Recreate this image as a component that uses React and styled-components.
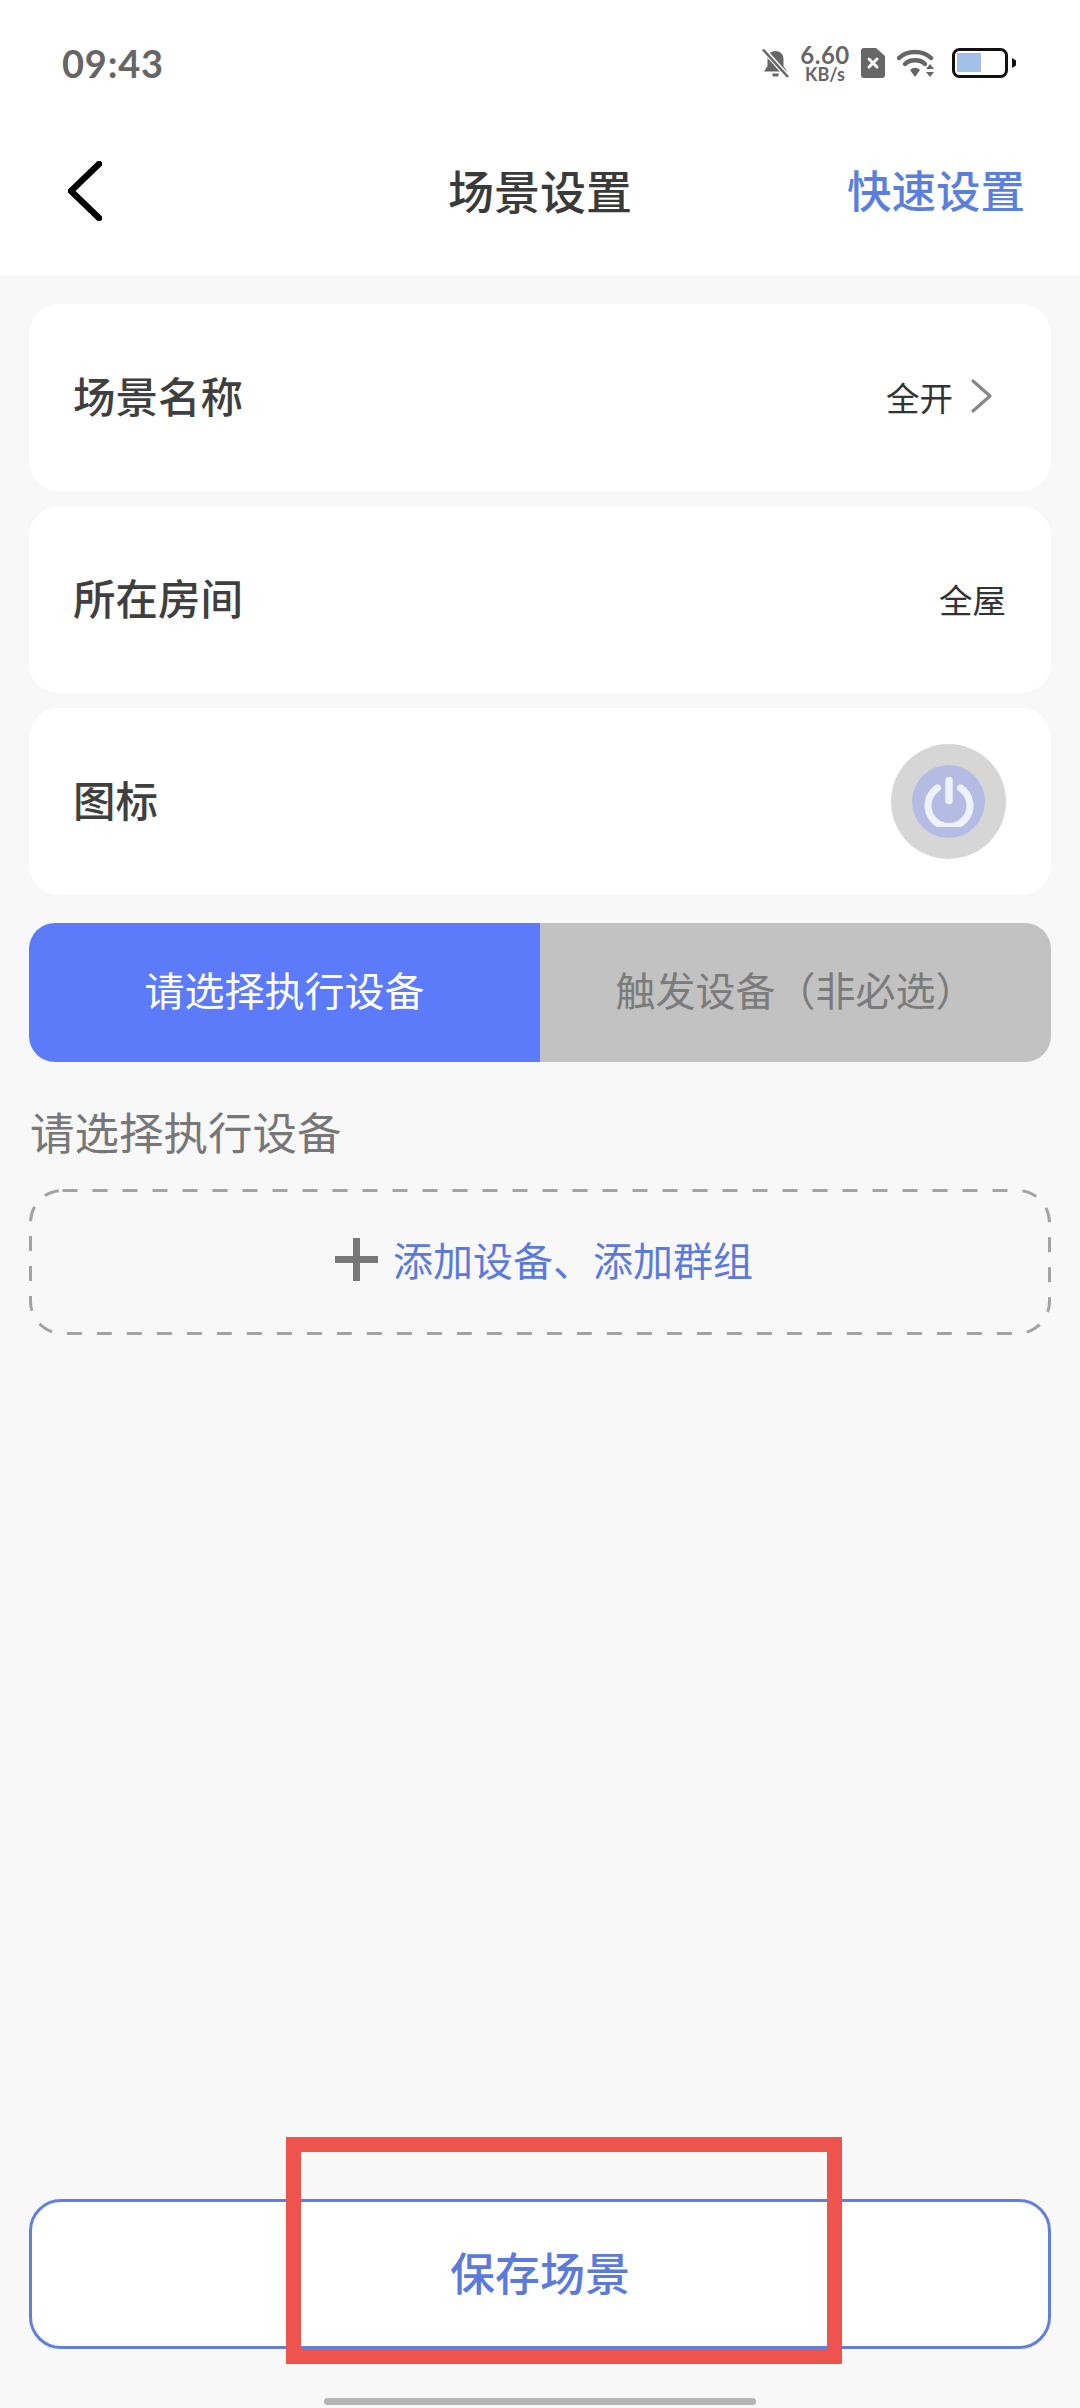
import React from "react";
import styled, { createGlobalStyle } from "styled-components";

const Global = createGlobalStyle`
  html, body { margin: 0; padding: 0; background: #f8f8f9; }
  * { box-sizing: border-box; }
  body { font-family: "Noto Sans CJK SC", "Noto Sans", sans-serif; }
`;

const Page = styled.div`
  position: relative;
  width: 1080px;
  height: 2408px;
  overflow: hidden;
  background: #f8f8f9;
  display: flex;
  flex-direction: column;
`;

const Top = styled.header`
  background: #fff;
  height: 275px;
  flex: none;
`;

const StatusBar = styled.div`
  height: 126px;
  padding: 0 64px 0 62px;
  display: flex;
  align-items: center;
  justify-content: space-between;
`;

const Time = styled.span`
  font-family: Lato, "Noto Sans", sans-serif;
  font-size: 38px;
  font-weight: 700;
  letter-spacing: 0.8px;
  color: #666;
`;

const StatusIcons = styled.div`
  display: flex;
  align-items: center;
`;

const Speed = styled.div`
  width: 48px;
  margin: 0 12px;
  display: flex;
  flex-direction: column;
  align-items: center;
  font-family: Lato, "Noto Sans", sans-serif;
  font-weight: 700;
  color: #666;
`;

const SpeedValue = styled.span`
  font-size: 24px;
  line-height: 23px;
  letter-spacing: 0.5px;
`;

const SpeedUnit = styled.span`
  font-size: 18px;
  line-height: 17px;
`;

const Nav = styled.nav`
  height: 132px;
  padding: 0 55px 3px;
  display: grid;
  grid-template-columns: 1fr auto 1fr;
  align-items: center;
`;

const BackIcon = styled.svg`
  width: 34px;
  height: 60px;
  margin-left: 13px;
  display: block;
`;

const Title = styled.h1`
  margin: 0;
  padding-bottom: 3px;
  font-size: 46px;
  line-height: 60px;
  font-weight: 500;
  color: #3a3a3a;
`;

const QuickLink = styled.span`
  justify-self: end;
  padding-bottom: 3px;
  font-size: 44.5px;
  line-height: 60px;
  font-weight: 500;
  color: #5b7fdc;
`;

const Content = styled.main`
  flex: 1;
  padding: 29px 29px 0;
  display: flex;
  flex-direction: column;
`;

const Cards = styled.div`
  display: flex;
  flex-direction: column;
  gap: 15px;
`;

const Card = styled.div`
  height: 187px;
  padding: 0 ${(p) => p.$pr || 45}px 0 44px;
  background: #fff;
  border-radius: 30px;
  display: flex;
  align-items: center;
  justify-content: space-between;
`;

const Label = styled.span`
  padding-bottom: 6px;
  font-size: 42.5px;
  font-weight: 500;
  color: #3f3f3f;
`;

const Value = styled.span`
  padding-bottom: 3px;
  display: flex;
  align-items: center;
  gap: 18px;
  font-size: 33.5px;
  color: #333;
`;

const ChevronIcon = styled.svg`
  width: 22px;
  height: 34px;
  display: block;
`;

const SceneIcon = styled.div`
  width: 115px;
  height: 115px;
  border-radius: 50%;
  background: #d6d6d6;
  display: flex;
  align-items: center;
  justify-content: center;
`;

const SceneIconInner = styled.div`
  width: 73px;
  height: 73px;
  border-radius: 50%;
  background: #b4bce4;
  display: flex;
  align-items: center;
  justify-content: center;
`;

const Tabs = styled.div`
  margin-top: 28px;
  height: 139px;
  border-radius: 26px;
  overflow: hidden;
  display: flex;
`;

const Tab = styled.div`
  flex: 1;
  padding-bottom: 7px;
  display: flex;
  align-items: center;
  justify-content: center;
  font-size: 40px;
  background: ${(p) => (p.$active ? "#5b7bfb" : "#c2c2c2")};
  color: ${(p) => (p.$active ? "#fff" : "#7b7b7b")};
`;

const SectionLabel = styled.div`
  margin: 38px 0 27px 1px;
  font-size: 44.5px;
  line-height: 62px;
  color: #777;
`;

const Dashed = styled.div`
  position: relative;
  height: 146px;
  padding: 0 0 6px 8px;
  display: flex;
  align-items: center;
  justify-content: center;
  gap: 15px;
`;

const DashedOutline = styled.svg`
  position: absolute;
  left: 0;
  top: 0;
  width: 100%;
  height: 100%;
`;

const PlusIcon = styled.svg`
  width: 43px;
  height: 43px;
  display: block;
`;

const AddText = styled.span`
  font-size: 40px;
  color: #5b7bdc;
`;

const SaveButton = styled.button`
  margin-top: auto;
  margin-bottom: 59px;
  height: 150px;
  padding: 0 0 5px;
  background: #fff;
  border: 3px solid #647fdb;
  border-radius: 32px;
  font-family: inherit;
  font-size: 45px;
  font-weight: 500;
  color: #5b7bdc;
`;

const HomeBar = styled.div`
  position: absolute;
  left: 324px;
  top: 2398px;
  width: 432px;
  height: 7px;
  border-radius: 4px;
  background: #b4b4b4;
`;

const Annotation = styled.div`
  position: absolute;
  left: 286px;
  top: 2137px;
  width: 556px;
  height: 227px;
  border: 15px solid #ef534e;
`;

const Svg = styled.svg`
  display: block;
  flex: none;
`;

const WifiIcon = styled(Svg)`
  margin-left: 12px;
`;

const BatteryIcon = styled(Svg)`
  margin-left: 17px;
`;

export default function App() {
  return (
    <Page>
      <Global />
      <Top>
        <StatusBar>
          <Time>09:43</Time>
          <StatusIcons>
            <Svg width="27" height="30" viewBox="0 0 27 30">
              <path d="M13.5 3c-5 0-8 3.5-8 8.5v6.5l-3.500 5.500h23l-3.500-5.500v-6.500c0-5-3-8.500-8-8.500z" fill="#666" />
              <path d="M10 25.500h7l-1 3h-5z" fill="#666" />
              <path d="M1 1l25 28" stroke="#fff" strokeWidth="5" />
              <path d="M1 1.500l25 27.500" stroke="#666" strokeWidth="2.6" />
            </Svg>
            <Speed>
              <SpeedValue>6.60</SpeedValue>
              <SpeedUnit>KB/s</SpeedUnit>
            </Speed>
            <Svg width="24" height="30" viewBox="0 0 24 30">
              <path d="M3 0h12l9 8v19a3 3 0 0 1-3 3H3a3 3 0 0 1-3-3V3a3 3 0 0 1 3-3z" fill="#666" />
              <path d="M8 11l8 8M16 11l-8 8" stroke="#fff" strokeWidth="3" strokeLinecap="round" />
            </Svg>
            <WifiIcon width="38" height="30" viewBox="0 0 38 30">
              <path d="M2 10c8-8 24-8 32 0" stroke="#666" strokeWidth="4.5" fill="none" strokeLinecap="round" />
              <path d="M8 16c5-5 15-5 20 0" stroke="#666" strokeWidth="4.5" fill="none" strokeLinecap="round" />
              <path d="M13 22c3-3 7-3 10 0l-5 7z" fill="#666" />
              <path d="M33 16l4 5h-8zM29 24h8l-4 5z" fill="#666" />
            </WifiIcon>
            <BatteryIcon width="64" height="30" viewBox="0 0 64 30">
              <rect x="1.500" y="1.500" width="53" height="27" rx="6" fill="#fff" stroke="#111" strokeWidth="3" />
              <rect x="5" y="5" width="24" height="19" fill="#a3c0e8" />
              <path d="M60 10l4 2.500v5l-4 2.500z" fill="#111" />
            </BatteryIcon>
          </StatusIcons>
        </StatusBar>
        <Nav>
          <BackIcon viewBox="0 0 34 60">
            <path d="M31 3L3 30l28 27" fill="none" stroke="#000" strokeWidth="6.5" strokeLinecap="round" strokeLinejoin="round" />
          </BackIcon>
          <Title>场景设置</Title>
          <QuickLink>快速设置</QuickLink>
        </Nav>
      </Top>
      <Content>
        <Cards>
          <Card $pr={58}>
            <Label>场景名称</Label>
            <Value>
              全开
              <ChevronIcon viewBox="0 0 22 34">
                <path d="M2 2l17 15L2 32" fill="none" stroke="#888" strokeWidth="3.2" strokeLinecap="round" strokeLinejoin="round" />
              </ChevronIcon>
            </Value>
          </Card>
          <Card>
            <Label>所在房间</Label>
            <Value>全屋</Value>
          </Card>
          <Card>
            <Label>图标</Label>
            <SceneIcon>
              <SceneIconInner>
                <Svg width="52" height="50" viewBox="0 0 52 50">
                  <path d="M14.500 11a21 21 0 1 0 23 0" fill="none" stroke="#eef2fb" strokeWidth="7" strokeLinecap="round" />
                  <path d="M26 3.500v20" stroke="#eef2fb" strokeWidth="7.5" strokeLinecap="round" />
                </Svg>
              </SceneIconInner>
            </SceneIcon>
          </Card>
        </Cards>
        <Tabs>
          <Tab $active>请选择执行设备</Tab>
          <Tab>触发设备（非必选）</Tab>
        </Tabs>
        <SectionLabel>请选择执行设备</SectionLabel>
        <Dashed>
          <DashedOutline viewBox="0 0 1022 146">
            <rect x="1.500" y="1.500" width="1019" height="143" rx="32" fill="none" stroke="#a3a3a3" strokeWidth="3" strokeDasharray="15 15" />
          </DashedOutline>
          <PlusIcon viewBox="0 0 43 43">
            <path d="M0 21.500h43M21.500 0v43" stroke="#777" strokeWidth="7" />
          </PlusIcon>
          <AddText>添加设备、添加群组</AddText>
        </Dashed>
        <SaveButton>保存场景</SaveButton>
      </Content>
      <HomeBar />
      <Annotation />
    </Page>
  );
}
